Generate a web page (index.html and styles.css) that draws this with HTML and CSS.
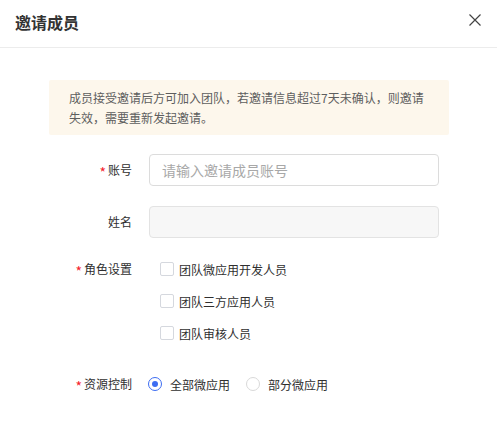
FILE: index.html
```html
<!DOCTYPE html>
<html lang="zh-CN">
<head>
    <meta charset="UTF-8">
    <meta name="viewport" content="width=device-width, initial-scale=1.0">
    <title>邀请成员</title>
    <link rel="stylesheet" href="styles.css">
</head>
<body>
    <div class="dialog">
        <div class="dialog-header">
            <h2>邀请成员</h2>
            <button class="close-btn" type="button" aria-label="关闭">
                <svg width="12" height="12" viewBox="0 0 12 12">
                    <path d="M0.5 0.5 L11.5 11.5 M11.5 0.5 L0.5 11.5" stroke="#444" stroke-width="1.2" fill="none"/>
                </svg>
            </button>
        </div>

        <div class="dialog-body">
            <p class="notice">成员接受邀请后方可加入团队，若邀请信息超过7天未确认，则邀请失效，需要重新发起邀请。</p>

            <form class="invite-form">
                <div class="form-row">
                    <label class="form-label" for="account"><span class="required">*</span>账号</label>
                    <input type="text" id="account" class="text-input" placeholder="请输入邀请成员账号">
                </div>
                <div class="form-row">
                    <label class="form-label" for="name">姓名</label>
                    <input type="text" id="name" class="text-input" disabled>
                </div>
                <div class="form-row roles-row">
                    <label class="form-label"><span class="required">*</span>角色设置</label>
                    <div class="check-group">
                        <label class="check-item"><span class="checkbox"></span>团队微应用开发人员</label>
                        <label class="check-item"><span class="checkbox"></span>团队三方应用人员</label>
                        <label class="check-item"><span class="checkbox"></span>团队审核人员</label>
                    </div>
                </div>
                <div class="form-row resource-row">
                    <label class="form-label"><span class="required">*</span>资源控制</label>
                    <div class="radio-group">
                        <label class="radio-item"><span class="radio checked"></span>全部微应用</label>
                        <label class="radio-item"><span class="radio"></span>部分微应用</label>
                    </div>
                </div>
            </form>
        </div>
    </div>
</body>
</html>
```

FILE: styles.css
```css
:root {
    --text-color: #2f2f2f;
    --muted-color: #5e5e5e;
    --border-color: #dcdcdc;
    --primary-color: #3d6df2;
    --danger-color: #f5222d;
}

* {
    box-sizing: border-box;
    margin: 0;
    padding: 0;
}

body {
    font-family: "Noto Sans CJK SC", "Noto Sans", sans-serif;
    background-color: #ffffff;
    color: var(--text-color);
    font-size: 12px;
}

.dialog {
    width: 497px;
}

.dialog-header {
    height: 48px;
    padding: 0 15px;
    display: flex;
    align-items: center;
    justify-content: space-between;
    border-bottom: 1px solid #ececec;
}

.dialog-header h2 {
    font-size: 16px;
    font-weight: 700;
    color: #333333;
    line-height: 22px;
    margin-top: -4px;
}

.close-btn {
    border: none;
    background: none;
    width: 12px;
    height: 12px;
    display: flex;
    margin-top: -8px;
    margin-right: 1px;
    cursor: pointer;
}

.dialog-body {
    padding: 32px 48px 0 49px;
}

.notice {
    background-color: #fdf7ec;
    color: var(--muted-color);
    padding: 8px 20px 7px;
    line-height: 20px;
    border-radius: 2px;
}

.invite-form {
    margin-left: -49px;
    margin-top: 19px;
}

.form-row {
    display: grid;
    grid-template-columns: 132px 290px;
    column-gap: 17px;
    margin-bottom: 18px;
}

.form-row.roles-row {
    margin-top: -3px;
    margin-bottom: 19px;
}

.form-label {
    text-align: right;
    line-height: 32px;
    color: var(--text-color);
}

.required {
    color: var(--danger-color);
    font-size: 14px;
    margin-right: 2px;
    vertical-align: -3px;
}

.text-input {
    height: 32px;
    width: 290px;
    border: 1px solid var(--border-color);
    border-radius: 4px;
    padding: 0 12px;
    font-family: inherit;
    font-size: 14px;
    color: var(--text-color);
    background-color: #ffffff;
    outline: none;
}

.text-input::placeholder {
    color: #a8a8a8;
}

.text-input:disabled {
    background-color: #f7f7f7;
    border-color: #e3e3e3;
}

.check-group {
    display: flex;
    flex-direction: column;
    padding-left: 11px;
}

.check-item,
.radio-item {
    display: flex;
    align-items: center;
    height: 32px;
    color: var(--text-color);
}

.checkbox {
    width: 14px;
    height: 14px;
    border: 1px solid #d5d8de;
    border-radius: 2px;
    background-color: #ffffff;
    margin-right: 5px;
}

.radio-group {
    display: flex;
    gap: 16px;
    margin-left: -1px;
}

.radio {
    width: 14px;
    height: 14px;
    border: 1px solid #d9d9d9;
    border-radius: 50%;
    margin-right: 8px;
    display: flex;
    align-items: center;
    justify-content: center;
}

.radio.checked {
    border-color: var(--primary-color);
}

.radio.checked::after {
    content: "";
    width: 6px;
    height: 6px;
    border-radius: 50%;
    background-color: var(--primary-color);
}
```
